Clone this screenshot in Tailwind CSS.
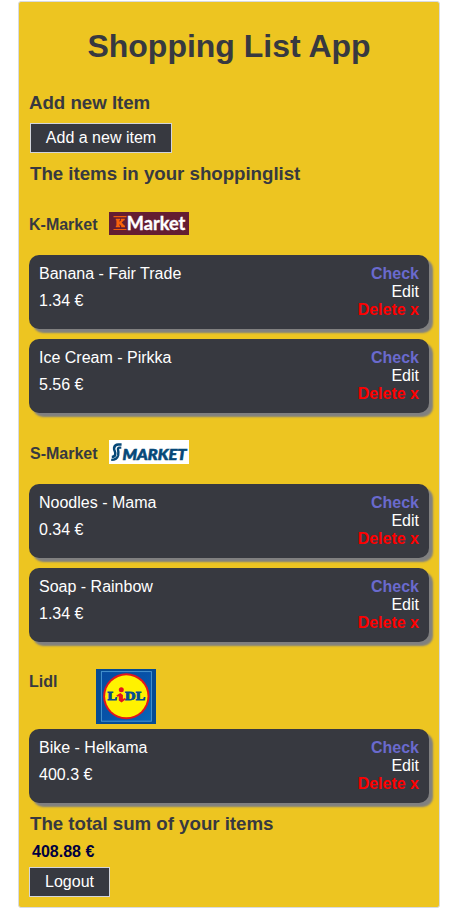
<!DOCTYPE html>
<html lang="en">
<head>
<meta charset="utf-8">
<title>Shopping List App</title>
<script src="https://cdn.jsdelivr.net/npm/@tailwindcss/browser@4"></script>
</head>
<body class="bg-white pt-px font-['Liberation_Sans',Arial,sans-serif] text-base leading-[18px]">
<main class="ml-[18px] flex h-[907px] w-[422px] flex-col rounded-[3px] border border-[#d8dbe0] bg-[#edc521] px-[10px] text-[#373940]">
  <h1 class="mt-[26px] h-9 text-center text-[32px] font-bold leading-9">Shopping List App</h1>
  <h3 class="mt-7 text-[18.72px] font-bold leading-[22px] tracking-[-0.03px]">Add new Item</h3>
  <button class="ml-px mt-[9px] h-[30px] w-[142px] border border-[#d3d5da] bg-[#373940] text-white">Add a new item</button>
  <h3 class="ml-px mt-[10px] text-[18.72px] font-bold leading-[22px] tracking-[-0.03px]">The items in your shoppinglist</h3>

  <section class="flex flex-col gap-[10px] pt-[27px]">
    <div class="-mb-[10px] flex h-[43px] items-start">
      <h4 class="mt-1 w-20 font-bold">K-Market</h4>
      <svg class="h-[23px] w-20" viewBox="0 0 80 23">
        <rect width="80" height="23" fill="#641d32"/>
        <path d="M4.5 4.6H17.5M4.5 17.5H17.5" stroke="#f05a0a" stroke-width="1.2"/>
        <path d="M6.8 6.8h4.2v1.4h-.6v1.6l1.9-1.6h-.5V6.8h3.9v1.5h-.7l-2.3 2.2 2.6 3.1h.7v1.6h-3.8v-1.3l-1.8-2v1.8h.6v1.5H6.8v-1.5h.6V8.2h-.6z" fill="#f8610a"/>
        <text x="17.8" y="17.7" fill="#fff" stroke="#fff" stroke-width=".35" font-family="Lato, sans-serif" font-weight="700" font-size="18" textLength="58.5" lengthAdjust="spacingAndGlyphs">Market</text>
      </svg>
    </div>
    <article class="flex h-[74px] justify-between rounded-[10px] bg-[#373940] px-[10px] pt-[10px] text-white shadow-[4px_4px_2px_gray]">
      <div><p>Banana - Fair Trade</p><p class="mt-[9px]">1.34 €</p></div>
      <div class="text-right"><p class="font-bold text-[#6a6acd]">Check</p><p>Edit</p><p class="font-bold text-[#ff0000]">Delete x</p></div>
    </article>
    <article class="flex h-[74px] justify-between rounded-[10px] bg-[#373940] px-[10px] pt-[10px] text-white shadow-[4px_4px_2px_gray]">
      <div><p>Ice Cream - Pirkka</p><p class="mt-[9px]">5.56 €</p></div>
      <div class="text-right"><p class="font-bold text-[#6a6acd]">Check</p><p>Edit</p><p class="font-bold text-[#ff0000]">Delete x</p></div>
    </article>
  </section>

  <section class="flex flex-col gap-[10px] pt-[27px]">
    <div class="-mb-[10px] flex h-11 items-start">
      <h4 class="ml-px mt-[5px] w-[79px] font-bold">S-Market</h4>
      <svg class="h-6 w-20" viewBox="0 0 80 24">
        <rect width="80" height="24" fill="#fff"/>
        <path d="M12.6 4.6H9.2Q5.6 4.8 5.1 8Q4.9 9.5 5.8 11.3Q6.6 13 6.1 15Q5.4 16.9 2.8 17" fill="none" stroke="#064878" stroke-width="2.5"/>
        <path d="M12.3 7.6H10.4Q8.8 7.8 9 9.7Q9.8 12.5 9.2 15.2Q8 19.9 2.2 19.9" fill="none" stroke="#064878" stroke-width="2.4"/>
        <text x="13.5" y="20" fill="#064878" stroke="#064878" stroke-width=".6" font-family="Lato, sans-serif" font-weight="900" font-style="italic" font-size="15.2" textLength="64" lengthAdjust="spacingAndGlyphs">MARKET</text>
      </svg>
    </div>
    <article class="flex h-[74px] justify-between rounded-[10px] bg-[#373940] px-[10px] pt-[10px] text-white shadow-[4px_4px_2px_gray]">
      <div><p>Noodles - Mama</p><p class="mt-[9px]">0.34 €</p></div>
      <div class="text-right"><p class="font-bold text-[#6a6acd]">Check</p><p>Edit</p><p class="font-bold text-[#ff0000]">Delete x</p></div>
    </article>
    <article class="flex h-[74px] justify-between rounded-[10px] bg-[#373940] px-[10px] pt-[10px] text-white shadow-[4px_4px_2px_gray]">
      <div><p>Soap - Rainbow</p><p class="mt-[9px]">1.34 €</p></div>
      <div class="text-right"><p class="font-bold text-[#6a6acd]">Check</p><p>Edit</p><p class="font-bold text-[#ff0000]">Delete x</p></div>
    </article>
  </section>

  <section class="pt-[27px]">
    <div class="flex h-[60px] items-start">
      <h4 class="mt-1 w-[67px] font-bold">Lidl</h4>
      <svg class="h-[55px] w-[60px]" viewBox="0 0 60 55">
        <defs><linearGradient id="lb" x1="0" y1="0" x2="1" y2="1"><stop offset="0" stop-color="#064ba0"/><stop offset=".5" stop-color="#0752a8"/><stop offset="1" stop-color="#0a66b8"/></linearGradient></defs>
        <rect width="60" height="55" fill="#064b93"/>
        <rect x="5.4" y="2.6" width="50" height="49.6" fill="url(#lb)" stroke="#4c9ad4" stroke-width=".9"/>
        <ellipse cx="30.3" cy="27.3" rx="23.2" ry="23" fill="#e3151c"/>
        <ellipse cx="30.3" cy="27.3" rx="21.2" ry="21" fill="#fff200"/>
        <g fill="#064b93" stroke="#064b93" stroke-width=".9" font-family="Liberation Serif, serif" font-weight="700" font-size="12.5">
          <text x="11.5" y="31" textLength="9.5" lengthAdjust="spacingAndGlyphs">L</text>
          <text x="29" y="31" textLength="10.5" lengthAdjust="spacingAndGlyphs">D</text>
          <text x="39.8" y="31" textLength="9.5" lengthAdjust="spacingAndGlyphs">L</text>
        </g>
        <circle cx="25.3" cy="20.7" r="2.5" fill="#e3151c"/>
        <path d="M20.3 26.5l4-2.5 2.6 2v4l2-1 1 1-4.3 3.4-2.8-2v-4.2l-1.5.6z" fill="#e3151c"/>
      </svg>
    </div>
    <article class="flex h-[74px] justify-between rounded-[10px] bg-[#373940] px-[10px] pt-[10px] text-white shadow-[4px_4px_2px_gray]">
      <div><p>Bike - Helkama</p><p class="mt-[9px]">400.3 €</p></div>
      <div class="text-right"><p class="font-bold text-[#6a6acd]">Check</p><p>Edit</p><p class="font-bold text-[#ff0000]">Delete x</p></div>
    </article>
  </section>

  <h3 class="ml-px mt-[10px] text-[18.72px] font-bold leading-[22px] tracking-[-0.03px]">The total sum of your items</h3>
  <p class="ml-[3px] mt-2 font-bold text-[#000040]">408.88 €</p>
  <button class="mt-[6px] h-[30px] w-[81px] border border-[#d3d5da] bg-[#373940] text-white">Logout</button>
</main>
</body>
</html>
